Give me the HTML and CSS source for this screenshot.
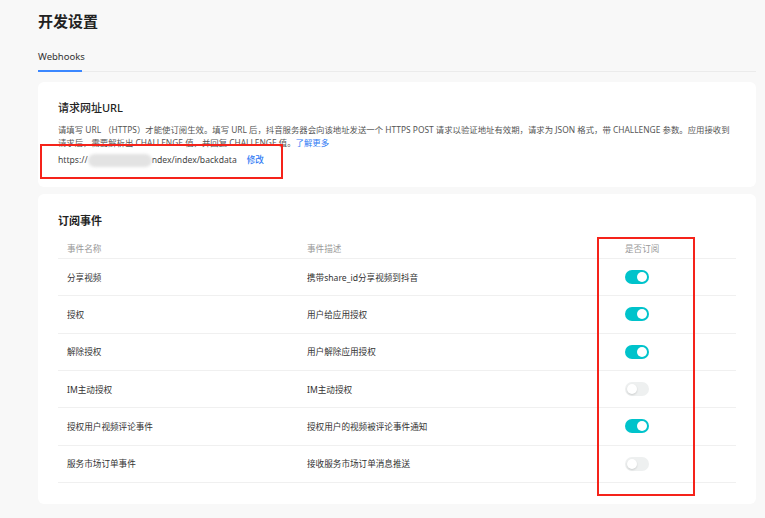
FILE: index.html
```html
<!DOCTYPE html>
<html lang="zh-CN">
<head>
<meta charset="utf-8">
<title>开发设置</title>
<link rel="stylesheet" href="styles.css">
</head>
<body>
<div class="page">
  <h1 class="title">开发设置</h1>
  <div class="tabs">
    <div class="tab active">Webhooks</div>
  </div>

  <section class="card card-url">
    <h2 class="card-title">请求网址URL</h2>
    <p class="desc"><span class="line">请填写 URL （HTTPS）才能使订阅生效。填写 URL 后，抖音服务器会向该地址发送一个 HTTPS POST 请求以验证地址有效期，请求为 JSON 格式，带 CHALLENGE 参数。应用接收到</span><span class="line">请求后，需要解析出 CHALLENGE 值，并回复 CHALLENGE 值。<a class="link">了解更多</a></span></p>
    <div class="url-row">
      <span class="url">https://<span class="blur"></span>ndex/index/backdata</span>
      <a class="link edit">修改</a>
    </div>
    <div class="mark mark-url"></div>
  </section>

  <section class="card card-events">
    <h2 class="card-title bold">订阅事件</h2>
    <div class="table">
      <div class="row head">
        <div class="c1">事件名称</div>
        <div class="c2">事件描述</div>
        <div class="c3">是否订阅</div>
      </div>
      <div class="row">
        <div class="c1">分享视频</div>
        <div class="c2">携带share_id分享视频到抖音</div>
        <div class="c3"><span class="switch on"></span></div>
      </div>
      <div class="row">
        <div class="c1">授权</div>
        <div class="c2">用户给应用授权</div>
        <div class="c3"><span class="switch on"></span></div>
      </div>
      <div class="row">
        <div class="c1">解除授权</div>
        <div class="c2">用户解除应用授权</div>
        <div class="c3"><span class="switch on"></span></div>
      </div>
      <div class="row">
        <div class="c1">IM主动授权</div>
        <div class="c2">IM主动授权</div>
        <div class="c3"><span class="switch"></span></div>
      </div>
      <div class="row">
        <div class="c1">授权用户视频评论事件</div>
        <div class="c2">授权用户的视频被评论事件通知</div>
        <div class="c3"><span class="switch on"></span></div>
      </div>
      <div class="row">
        <div class="c1">服务市场订单事件</div>
        <div class="c2">接收服务市场订单消息推送</div>
        <div class="c3"><span class="switch"></span></div>
      </div>
    </div>
    <div class="mark mark-col"></div>
  </section>
</div>
</body>
</html>
```

FILE: styles.css
```css
* { box-sizing: border-box; }
html, body { margin: 0; padding: 0; }
body {
  background: #f8f8f8;
  font-family: "Noto Sans", "Noto Sans CJK SC", sans-serif;
  color: #333;
  width: 765px;
  height: 518px;
  overflow: hidden;
}
.page {
  padding: 11px 9px 0 38px;
}
.title {
  margin: 0;
  font-size: 15px;
  line-height: 20px;
  font-weight: 700;
  color: #222;
}
.tabs {
  margin-top: 19px;
  border-bottom: 1px solid #ebebeb;
  display: flex;
}
.tab {
  font-size: 9.5px;
  line-height: 14px;
  color: #333;
  padding-bottom: 6px;
  margin-bottom: -1px;
}
.tab.active {
  border-bottom: 2px solid #3b87ff;
  width: 44px;
}
.card {
  position: relative;
  background: #fff;
  border-radius: 6px;
  padding: 0 20px;
}
.card-url {
  margin-top: 10px;
  padding-top: 18px;
  padding-bottom: 20px;
}
.card-title {
  margin: 0;
  font-size: 11px;
  line-height: 16px;
  font-weight: 500;
  color: #222;
}
.card-title.bold { font-weight: 700; }
.desc {
  margin: 7px 0 0;
  font-size: 8.4px;
  line-height: 13px;
  color: #555;
}
.desc .line { display: block; white-space: nowrap; }
.link {
  color: #2f7bf5;
  cursor: pointer;
}
.url-row {
  margin-top: 5px;
  font-size: 8.6px;
  line-height: 13px;
  color: #444;
  display: flex;
  align-items: center;
}
.url { display: inline-flex; align-items: center; }
.blur {
  display: inline-block;
  width: 64px;
  height: 13px;
  border-radius: 7px;
  background: #e3e3e3;
  filter: blur(1.5px);
}
.edit { margin-left: 10px; font-weight: 500; }
.mark {
  position: absolute;
  border: 2px solid #f5231a;
  pointer-events: none;
}
.mark-url {
  left: 2px;
  top: 62px;
  width: 243px;
  height: 35px;
}
.card-events {
  margin-top: 7px;
  padding-top: 19px;
  padding-bottom: 21px;
}
.table { margin-top: 9px; }
.row {
  display: flex;
  align-items: center;
  height: 37.33px;
  border-bottom: 1px solid #f0f0f0;
  font-size: 8.6px;
  color: #333;
}
.row.head {
  height: 21px;
  color: #999;
}
.c1 { width: 240px; padding-left: 9px; }
.c2 { width: 318px; padding-left: 9px; }
.c3 { flex: 1; padding-left: 9px; display: flex; align-items: center; }
.switch {
  position: relative;
  display: inline-block;
  width: 24px;
  height: 14px;
  border-radius: 7px;
  background: #eef0f0;
}
.switch::after {
  content: "";
  position: absolute;
  top: 2px;
  left: 2px;
  width: 10px;
  height: 10px;
  border-radius: 50%;
  background: #fff;
  box-shadow: 0 1px 2px rgba(0,0,0,0.15);
}
.switch.on { background: #00c3cb; }
.switch.on::after { left: 12px; box-shadow: none; }
.mark-col {
  left: 559px;
  top: 43px;
  width: 98px;
  height: 259px;
}
```
